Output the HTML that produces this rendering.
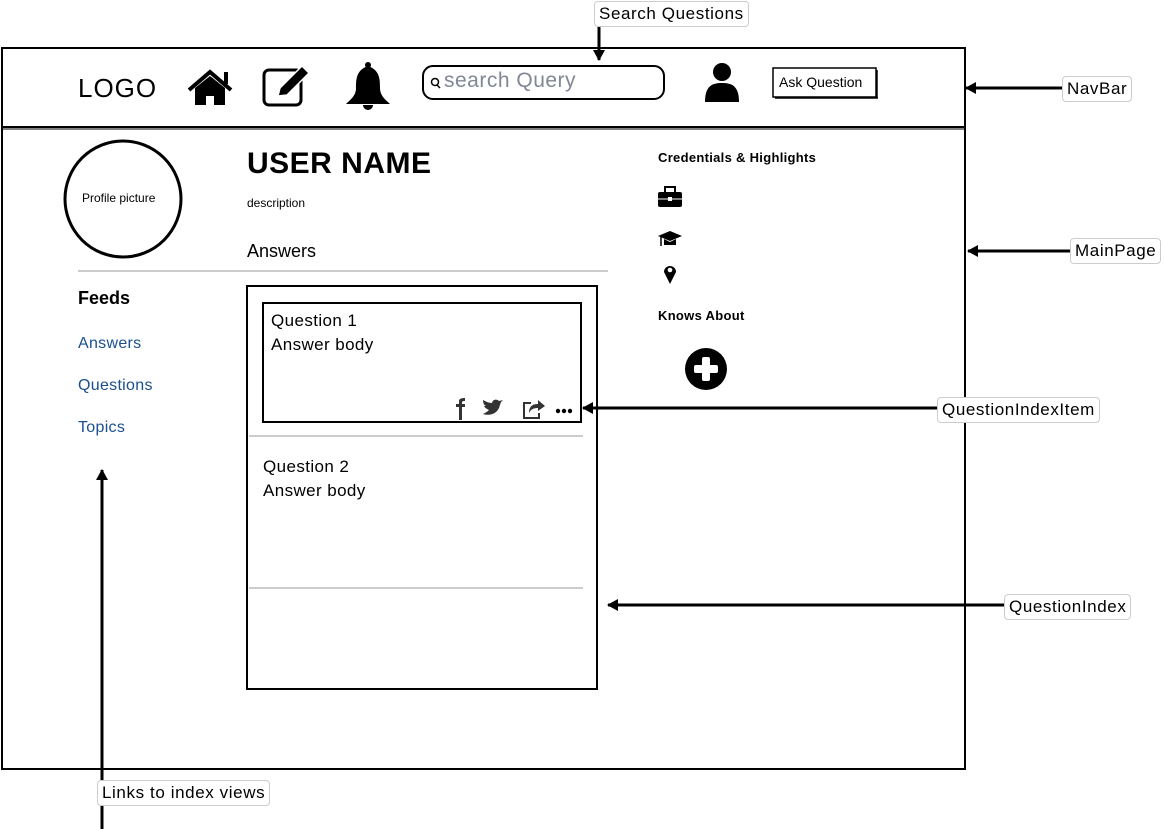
<!DOCTYPE html>
<html><head><meta charset="utf-8"><style>
body{margin:0;width:1164px;height:829px;background:#fff;overflow:hidden;font-family:"Liberation Sans",sans-serif;}
.a{position:absolute;white-space:nowrap;color:#000}
.lbl{position:absolute;border:1px solid #ccc;border-radius:4px;background:#fff;font-size:17px;padding:0 4px;height:24px;line-height:24px;letter-spacing:0.6px}
.lnk{color:#1a4f8f;font-size:16px;letter-spacing:0.3px}
</style></head><body>
<svg width="1164" height="829" style="position:absolute;left:0;top:0">
<defs><marker id="ah" markerUnits="userSpaceOnUse" markerWidth="12" markerHeight="14" refX="10" refY="7" orient="auto"><path d="M0,1 L11,7 L0,13 Z" fill="#000"/></marker></defs>
<rect x="2" y="48" width="963" height="721" fill="none" stroke="#000" stroke-width="2"/>
<line x1="2" y1="127" x2="965" y2="127" stroke="#000" stroke-width="2"/>
<line x1="2" y1="129" x2="965" y2="129" stroke="#000" stroke-width="1"/>
<rect x="423" y="66" width="241" height="33" rx="10" fill="none" stroke="#000" stroke-width="2"/>
<circle cx="435" cy="82" r="3.5" fill="none" stroke="#000" stroke-width="1.5"/><line x1="437" y1="85" x2="440" y2="88" stroke="#000" stroke-width="1.5"/>
<rect x="773" y="68" width="103" height="29" fill="#fff" stroke="#000" stroke-width="1.5"/>
<line x1="775" y1="98" x2="878" y2="98" stroke="#000" stroke-width="1.5"/><line x1="877" y1="70" x2="877" y2="98" stroke="#000" stroke-width="1.5"/>
<path d="M189,90 L210,72 L231,90" fill="none" stroke="#000" stroke-width="4"/>
<rect x="224" y="72" width="4" height="12" fill="#000"/>
<path d="M195,88 L210,76 L225,88 L225,105 L214,105 L214,96 L206,96 L206,105 L195,105 Z" fill="#000"/>
<rect x="264" y="70" width="37" height="35" rx="5" fill="none" stroke="#000" stroke-width="3"/>
<path d="M278,96 L280,88 L302,66 L309,73 L287,95 Z" fill="#000" stroke="#fff" stroke-width="1.5"/>
<path d="M368,66 C356,70 356,80 356,88 C356,96 350,100 346,104 L390,104 C386,100 380,96 380,88 C380,80 380,70 368,66 Z" fill="#000"/>
<circle cx="368" cy="65" r="3" fill="#000"/><path d="M363,105 A5,5 0 0 0 373,105" fill="#000"/>
<circle cx="722" cy="72" r="9" fill="#000"/><path d="M705,102 C705,86 712,83 722,83 C732,83 739,86 739,102 Z" fill="#000"/>
<circle cx="123" cy="199" r="58" fill="none" stroke="#000" stroke-width="3"/>
<line x1="78" y1="271" x2="608" y2="271" stroke="#ccc" stroke-width="2"/>
<rect x="247" y="286" width="350" height="403" fill="none" stroke="#000" stroke-width="2"/>
<rect x="263" y="303" width="318" height="119" fill="none" stroke="#000" stroke-width="2"/>
<line x1="249" y1="436" x2="583" y2="436" stroke="#ccc" stroke-width="2"/>
<line x1="249" y1="588" x2="583" y2="588" stroke="#ccc" stroke-width="2"/>
<path d="M459,420 L459,407 L456,407 L456,404 L459,404 L459,401 C459,399 461,398 465,398 L465,401 C463,401 462,401 462,403 L462,404 L465,404 L465,407 L462,407 L462,420 Z" fill="#333"/>
<path d="M483,414 C490,416 496,414 499,408 L501,402 L503,400 L499,401 C497,399 493,399 492,403 C488,403 485,401 483,400 C483,403 484,405 486,406 L484,406 C485,408 487,409 489,410 C487,412 485,413 483,414 Z" fill="#333"/>
<path d="M531,403 L524,403 L524,418 L539,418 L539,413" fill="none" stroke="#333" stroke-width="2"/>
<path d="M529,413 C529,406 533,404 538,404 L538,400 L545,406 L538,411 L538,408 C534,408 531,409 529,413 Z" fill="#333"/>
<circle cx="558" cy="411" r="2.2" fill="#000"/><circle cx="564" cy="411" r="2.2" fill="#000"/><circle cx="570" cy="411" r="2.2" fill="#000"/>
<rect x="658" y="192" width="24" height="15" rx="2" fill="#000"/><rect x="665" y="187" width="10" height="6" fill="none" stroke="#000" stroke-width="2"/><line x1="658" y1="199" x2="682" y2="199" stroke="#fff" stroke-width="1"/><rect x="668" y="197" width="4" height="4" fill="#fff"/>
<path d="M658,236 L670,231 L682,236 L670,241 Z" fill="#000"/><path d="M664,239 L664,245 L676,245 L676,239 L670,242 Z" fill="#000"/><line x1="661" y1="237" x2="661" y2="246" stroke="#000" stroke-width="1.5"/>
<path d="M670,284 L664,272 A6,6 0 1 1 676,272 Z" fill="#000"/><circle cx="670" cy="270" r="2.3" fill="#fff"/>
<circle cx="706" cy="369" r="21" fill="#000"/><rect x="694" y="365" width="24" height="8" rx="2" fill="#fff"/><rect x="702" y="357" width="8" height="24" rx="2" fill="#fff"/>
<g stroke="#000" stroke-width="3" fill="none">
<line x1="599" y1="27" x2="599" y2="60" marker-end="url(#ah)"/>
<line x1="1062" y1="88" x2="966" y2="88" marker-end="url(#ah)"/>
<line x1="1070" y1="251" x2="968" y2="251" marker-end="url(#ah)"/>
<line x1="937" y1="408" x2="583" y2="408" marker-end="url(#ah)"/>
<line x1="1004" y1="605" x2="608" y2="605" marker-end="url(#ah)"/>
<line x1="102" y1="829" x2="102" y2="470" marker-end="url(#ah)"/>
</g>
</svg>
<div class="a" style="left:78px;top:73px;font-size:26px;letter-spacing:1px">LOGO</div>
<div class="a" style="left:444px;top:69px;font-size:21px;color:#808896;letter-spacing:0.5px">search Query</div>
<div class="a" style="left:779px;top:74px;font-size:14px">Ask Question</div>
<div class="a" style="left:82px;top:191px;font-size:12px">Profile picture</div>
<div class="a" style="left:247px;top:147px;font-size:30px;font-weight:bold;letter-spacing:0.5px">USER NAME</div>
<div class="a" style="left:247px;top:196px;font-size:12px">description</div>
<div class="a" style="left:247px;top:241px;font-size:18px">Answers</div>
<div class="a" style="left:658px;top:150px;font-size:13px;font-weight:bold;letter-spacing:0.3px">Credentials &amp; Highlights</div>
<div class="a" style="left:658px;top:308px;font-size:13px;font-weight:bold;letter-spacing:0.3px">Knows About</div>
<div class="a" style="left:78px;top:288px;font-size:18px;font-weight:bold">Feeds</div>
<div class="a lnk" style="left:78px;top:335px">Answers</div>
<div class="a lnk" style="left:78px;top:377px">Questions</div>
<div class="a lnk" style="left:78px;top:419px">Topics</div>
<div class="a" style="left:271px;top:309px;font-size:17px;line-height:24px;letter-spacing:0.4px">Question 1<br>Answer body</div>
<div class="a" style="left:263px;top:455px;font-size:17px;line-height:24px;letter-spacing:0.4px">Question 2<br>Answer body</div>
<div class="lbl" style="left:594px;top:1px">Search Questions</div>
<div class="lbl" style="left:1062px;top:76px">NavBar</div>
<div class="lbl" style="left:1070px;top:238px">MainPage</div>
<div class="lbl" style="left:937px;top:397px">QuestionIndexItem</div>
<div class="lbl" style="left:1004px;top:594px">QuestionIndex</div>
<div class="lbl" style="left:97px;top:780px">Links to index views</div>
</body></html>
